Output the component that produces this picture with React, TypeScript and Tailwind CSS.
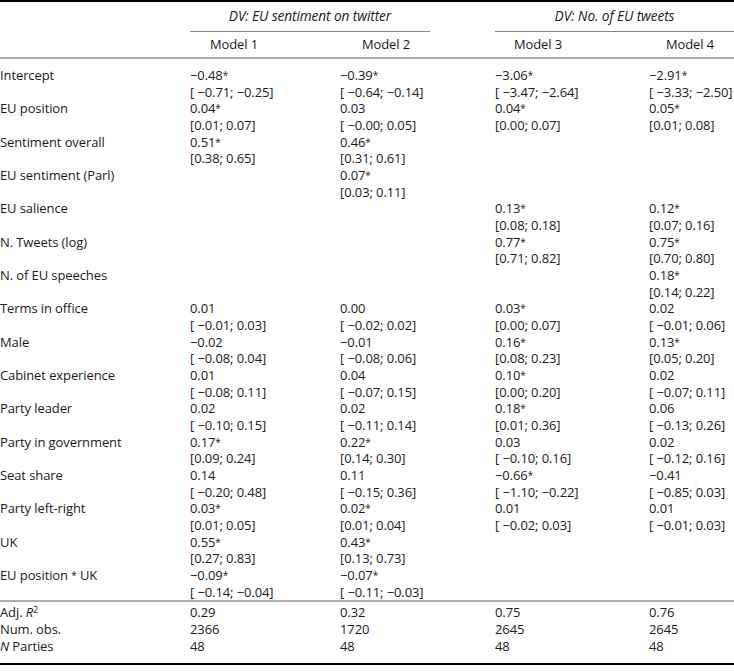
type Cell = [string, string] | null;

const rows: [string, Cell, Cell, Cell, Cell][] = [
  ["Intercept", ["−0.48*", "[ −0.71; −0.25]"], ["−0.39*", "[ −0.64; −0.14]"], ["−3.06*", "[ −3.47; −2.64]"], ["−2.91*", "[ −3.33; −2.50]"]],
  ["EU position", ["0.04*", "[0.01; 0.07]"], ["0.03", "[ −0.00; 0.05]"], ["0.04*", "[0.00; 0.07]"], ["0.05*", "[0.01; 0.08]"]],
  ["Sentiment overall", ["0.51*", "[0.38; 0.65]"], ["0.46*", "[0.31; 0.61]"], null, null],
  ["EU sentiment (Parl)", null, ["0.07*", "[0.03; 0.11]"], null, null],
  ["EU salience", null, null, ["0.13*", "[0.08; 0.18]"], ["0.12*", "[0.07; 0.16]"]],
  ["N. Tweets (log)", null, null, ["0.77*", "[0.71; 0.82]"], ["0.75*", "[0.70; 0.80]"]],
  ["N. of EU speeches", null, null, null, ["0.18*", "[0.14; 0.22]"]],
  ["Terms in office", ["0.01", "[ −0.01; 0.03]"], ["0.00", "[ −0.02; 0.02]"], ["0.03*", "[0.00; 0.07]"], ["0.02", "[ −0.01; 0.06]"]],
  ["Male", ["−0.02", "[ −0.08; 0.04]"], ["−0.01", "[ −0.08; 0.06]"], ["0.16*", "[0.08; 0.23]"], ["0.13*", "[0.05; 0.20]"]],
  ["Cabinet experience", ["0.01", "[ −0.08; 0.11]"], ["0.04", "[ −0.07; 0.15]"], ["0.10*", "[0.00; 0.20]"], ["0.02", "[ −0.07; 0.11]"]],
  ["Party leader", ["0.02", "[ −0.10; 0.15]"], ["0.02", "[ −0.11; 0.14]"], ["0.18*", "[0.01; 0.36]"], ["0.06", "[ −0.13; 0.26]"]],
  ["Party in government", ["0.17*", "[0.09; 0.24]"], ["0.22*", "[0.14; 0.30]"], ["0.03", "[ −0.10; 0.16]"], ["0.02", "[ −0.12; 0.16]"]],
  ["Seat share", ["0.14", "[ −0.20; 0.48]"], ["0.11", "[ −0.15; 0.36]"], ["−0.66*", "[ −1.10; −0.22]"], ["−0.41", "[ −0.85; 0.03]"]],
  ["Party left-right", ["0.03*", "[0.01; 0.05]"], ["0.02*", "[0.01; 0.04]"], ["0.01", "[ −0.02; 0.03]"], ["0.01", "[ −0.01; 0.03]"]],
  ["UK", ["0.55*", "[0.27; 0.83]"], ["0.43*", "[0.13; 0.73]"], null, null],
  ["EU position * UK", ["−0.09*", "[ −0.14; −0.04]"], ["−0.07*", "[ −0.11; −0.03]"], null, null],
];

const stats = [
  ["0.29", "0.32", "0.75", "0.76"],
  ["2366", "1720", "2645", "2645"],
  ["48", "48", "48", "48"],
];

const grid = "grid grid-cols-[190px_150px_155px_154px_85px] whitespace-nowrap";

// asterisks in the source are small and raised
function Txt({ s }: { s: string }) {
  const parts = s.split("*");
  return (
    <span>
      {parts.map((p, i) => (
        <span key={i}>
          {p}
          {i < parts.length - 1 && (
            <span className="text-[10px] leading-[0] relative top-[-1px]">*</span>
          )}
        </span>
      ))}
    </span>
  );
}

function Est({ cell }: { cell: Cell }) {
  if (!cell) return <div />;
  return (
    <div className="flex flex-col">
      <div className="h-[16.67px]">
        <Txt s={cell[0]} />
      </div>
      <div className="h-[16.67px]">{cell[1]}</div>
    </div>
  );
}

export default function App() {
  return (
    <div
      className="w-[734px] h-[671px] bg-white text-[#1a1a1a] text-[13px] leading-[16.67px] tracking-[-0.1px]"
      style={{ fontFamily: '"Open Sans", "Noto Sans", sans-serif' }}
    >
      <div className="h-[2px] bg-black" />

      {/* group headers */}
      <div className="flex h-[29px] text-[13.7px]">
        <div className="w-[190px]" />
        <div className="w-[240px] flex items-center justify-center italic">DV: EU sentiment on twitter</div>
        <div className="w-[65px]" />
        <div className="w-[239px] flex items-center justify-center italic">DV: No. of EU tweets</div>
      </div>
      <div className="flex h-px">
        <div className="w-[190px]" />
        <div className="w-[240px] bg-[#8a8a8a]" />
        <div className="w-[65px]" />
        <div className="w-[239px] bg-[#8a8a8a]" />
      </div>

      {/* model names */}
      <div className={`${grid} h-[25px] items-center`}>
        <div />
        <div className="w-[88px] text-center">Model 1</div>
        <div className="w-[92px] text-center">Model 2</div>
        <div className="w-[86px] text-center">Model 3</div>
        <div className="w-[82px] text-center">Model 4</div>
      </div>
      <div className="h-[2px] bg-[#adadad]" />

      {/* estimates */}
      <div className="pt-[8px] flex flex-col">
        {rows.map((r) => (
          <div key={r[0]} className={`${grid} h-[33.33px]`}>
            <div>
              <Txt s={r[0]} />
            </div>
            <Est cell={r[1]} />
            <Est cell={r[2]} />
            <Est cell={r[3]} />
            <Est cell={r[4]} />
          </div>
        ))}
      </div>
      <div className="h-[2px] bg-[#adadad]" />

      {/* fit statistics */}
      <div className="pt-[2px] pb-[9px] flex flex-col">
        <div className={grid}>
          <div>
            Adj. <span className="italic">R</span>
            <sup className="text-[9px] leading-[0]">2</sup>
          </div>
          {stats[0].map((v, i) => (
            <div key={i}>{v}</div>
          ))}
        </div>
        <div className={grid}>
          <div>Num. obs.</div>
          {stats[1].map((v, i) => (
            <div key={i}>{v}</div>
          ))}
        </div>
        <div className={grid}>
          <div>
            <span className="italic">N</span> Parties
          </div>
          {stats[2].map((v, i) => (
            <div key={i}>{v}</div>
          ))}
        </div>
      </div>
      <div className="h-[2px] bg-black" />
    </div>
  );
}
